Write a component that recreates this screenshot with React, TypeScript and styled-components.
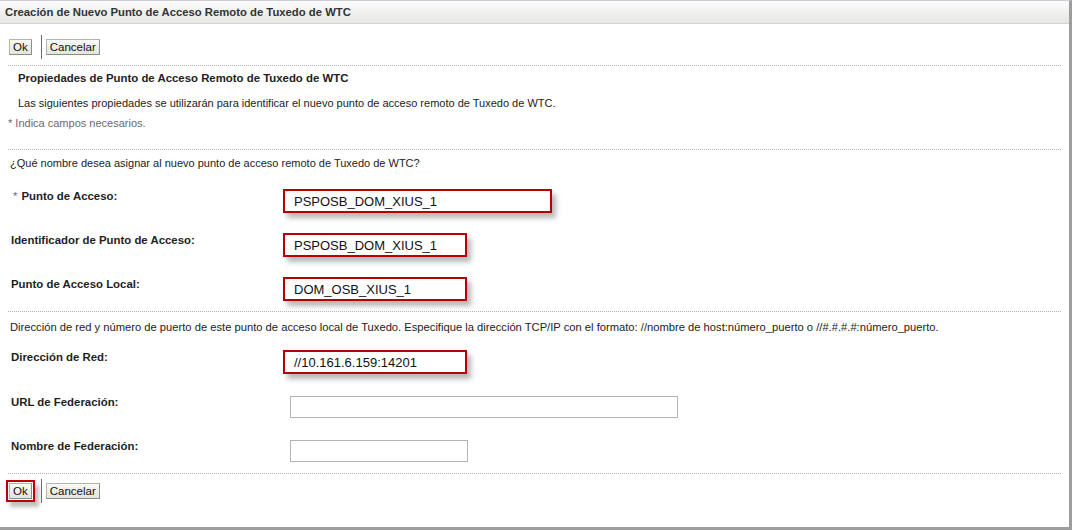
import styled, { createGlobalStyle } from 'styled-components'

const GlobalStyle = createGlobalStyle`
  html, body {
    margin: 0;
    padding: 0;
    background: #fff;
  }
  body {
    font-family: 'Liberation Sans', Arial, sans-serif;
    color: #222;
  }
`

const Frame = styled.div`
  box-sizing: border-box;
  width: 1072px;
  height: 530px;
  border-top: 1px solid #c8ced3;
  border-right: 3px solid #9c9e9c;
  border-bottom: 3px solid #9c9e9c;
  background: #fff;
  display: flex;
  flex-direction: column;
`

const TitleBar = styled.div`
  height: 22px;
  border-bottom: 1px solid #d5d7d4;
  background: linear-gradient(#fcfcfc, #f2f2f1 45%, #e6e7e5);
  display: flex;
  align-items: center;
  padding-left: 5px;
  font-size: 11.3px;
  font-weight: bold;
  color: #333;
`

const Content = styled.div`
  display: flex;
  flex-direction: column;
  padding: 0 8px 0 8px;
`

const ButtonBar = styled.div<{ $top: number }>`
  display: flex;
  align-items: center;
  height: 24px;
  margin-top: ${({ $top }) => $top}px;
  padding-left: 1px;
`

const Button = styled.button<{ $marked?: boolean }>`
  box-sizing: border-box;
  height: 16px;
  padding: 0 3px;
  border: 1px solid #8c8c88;
  border-top-color: #b4b4b0;
  border-left-color: #b4b4b0;
  border-radius: 0;
  background: linear-gradient(#fafaf6, #e4e4dc);
  font-family: 'Liberation Sans', Arial, sans-serif;
  font-size: 11.5px;
  line-height: 14px;
  color: #111;
  box-shadow: ${({ $marked }) =>
    $marked ? '0 0 0 1px #fff, 0 0 0 3px #c00000, 4px 5px 4px 3px rgba(0,0,0,0.25)' : 'none'};
`

const Separator = styled.span`
  width: 1px;
  height: 24px;
  background: #6b6b6b;
  margin: 0 4px 0 9px;
`

const Divider = styled.div<{ $top: number }>`
  height: 0;
  border-top: 1px dotted #b3b3b3;
  margin-top: ${({ $top }) => $top}px;
`

const Heading = styled.div`
  margin-top: 5px;
  padding-left: 10px;
  font-size: 11.4px;
  line-height: 14px;
  font-weight: bold;
  color: #222;
`

const Text = styled.div<{ $top: number; $left?: number; $size?: number; $muted?: boolean }>`
  margin-top: ${({ $top }) => $top}px;
  padding-left: ${({ $left }) => $left ?? 0}px;
  font-size: ${({ $size }) => $size ?? 11}px;
  line-height: 14px;
  color: ${({ $muted }) => ($muted ? '#6a6a6a' : '#222')};
  white-space: nowrap;
`

const Star = styled.span`
  color: #6a6a6a;
  font-weight: normal;
  margin: 0 4px 0 2px;
`

const Fields = styled.div<{ $top: number }>`
  display: grid;
  grid-template-columns: 275px auto;
  row-gap: 20px;
  margin-top: ${({ $top }) => $top}px;
  align-items: start;
`

const Label = styled.div`
  padding-left: 3px;
  font-size: 11.4px;
  line-height: 14px;
  font-weight: bold;
  color: #1e1e1e;
  white-space: nowrap;
`

const Marked = styled.div<{ $width: number }>`
  box-sizing: border-box;
  width: ${({ $width }) => $width}px;
  height: 24px;
  border: 2px solid #b80000;
  padding-left: 9px;
  display: flex;
  align-items: center;
  font-family: 'Liberation Sans', Arial, sans-serif;
  font-size: 13px;
  color: #111;
  box-shadow: 4px 5px 5px rgba(0, 0, 0, 0.28);
  justify-self: start;
`

const Input = styled.input<{ $width: number }>`
  box-sizing: border-box;
  width: ${({ $width }) => $width}px;
  height: 22px;
  margin: 1px 0 0 7px;
  border: 1px solid #b4b4b0;
  background: #fff;
  padding: 0 4px;
  font-family: 'Liberation Sans', Arial, sans-serif;
  font-size: 13px;
  outline: none;
`

const LowerFields = styled(Fields)`
  row-gap: 21px;
`

export default function App() {
  return (
    <>
      <GlobalStyle />
      <Frame>
        <TitleBar>Creación de Nuevo Punto de Acceso Remoto de Tuxedo de WTC</TitleBar>
        <Content>
          <ButtonBar $top={11}>
            <Button>Ok</Button>
            <Separator />
            <Button>Cancelar</Button>
          </ButtonBar>
          <Divider $top={6} />
          <Heading>Propiedades de Punto de Acceso Remoto de Tuxedo de WTC</Heading>
          <Text $top={11} $left={10}>
            Las siguientes propiedades se utilizarán para identificar el nuevo punto de acceso remoto de Tuxedo de WTC.
          </Text>
          <Text $top={6} $muted>
            * Indica campos necesarios.
          </Text>
          <Divider $top={19} />
          <Text $top={6} $left={2}>
            ¿Qué nombre desea asignar al nuevo punto de acceso remoto de Tuxedo de WTC?
          </Text>
          <Fields $top={19}>
            <Label>
              <Star>*</Star>Punto de Acceso:
            </Label>
            <Marked $width={269}>PSPOSB_DOM_XIUS_1</Marked>
            <Label>Identificador de Punto de Acceso:</Label>
            <Marked $width={184}>PSPOSB_DOM_XIUS_1</Marked>
            <Label>Punto de Acceso Local:</Label>
            <Marked $width={184}>DOM_OSB_XIUS_1</Marked>
          </Fields>
          <Divider $top={10} />
          <Text $top={8} $left={2} $size={11.2}>
            Dirección de red y número de puerto de este punto de acceso local de Tuxedo. Especifique la dirección
            TCP/IP con el formato: //nombre de host:número_puerto o //#.#.#.#:número_puerto.
          </Text>
          <LowerFields $top={16}>
            <Label>Dirección de Red:</Label>
            <Marked $width={184}>//10.161.6.159:14201</Marked>
            <Label>URL de Federación:</Label>
            <Input $width={388} defaultValue="" />
            <Label>Nombre de Federación:</Label>
            <Input $width={178} defaultValue="" />
          </LowerFields>
          <Divider $top={11} />
          <ButtonBar $top={5}>
            <Button $marked>Ok</Button>
            <Separator />
            <Button>Cancelar</Button>
          </ButtonBar>
        </Content>
      </Frame>
    </>
  )
}
